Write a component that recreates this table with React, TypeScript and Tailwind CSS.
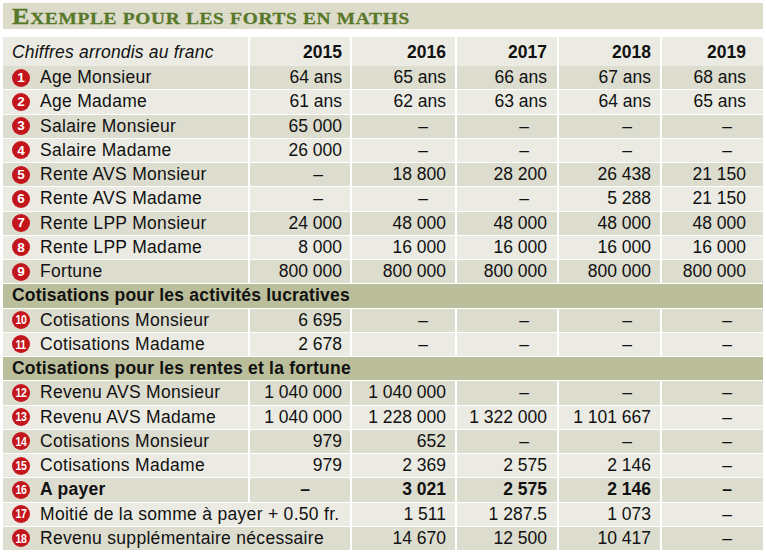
import React from 'react';

type Row =
  | { kind: 'section'; label: string }
  | { kind: 'data'; n: number; label: string; values: string[]; bold?: boolean; wide?: boolean };

const YEARS = ['2015', '2016', '2017', '2018', '2019'];

const ROWS: Row[] = [
  { kind: 'data', n: 1, label: 'Age Monsieur', values: ['64 ans', '65 ans', '66 ans', '67 ans', '68 ans'] },
  { kind: 'data', n: 2, label: 'Age Madame', values: ['61 ans', '62 ans', '63 ans', '64 ans', '65 ans'] },
  { kind: 'data', n: 3, label: 'Salaire Monsieur', values: ['65 000', '–', '–', '–', '–'] },
  { kind: 'data', n: 4, label: 'Salaire Madame', values: ['26 000', '–', '–', '–', '–'] },
  { kind: 'data', n: 5, label: 'Rente AVS Monsieur', values: ['–', '18 800', '28 200', '26 438', '21 150'] },
  { kind: 'data', n: 6, label: 'Rente AVS Madame', values: ['–', '–', '–', '5 288', '21 150'] },
  { kind: 'data', n: 7, label: 'Rente LPP Monsieur', values: ['24 000', '48 000', '48 000', '48 000', '48 000'] },
  { kind: 'data', n: 8, label: 'Rente LPP Madame', values: ['8 000', '16 000', '16 000', '16 000', '16 000'] },
  { kind: 'data', n: 9, label: 'Fortune', values: ['800 000', '800 000', '800 000', '800 000', '800 000'] },
  { kind: 'section', label: 'Cotisations pour les activités lucratives' },
  { kind: 'data', n: 10, label: 'Cotisations Monsieur', values: ['6 695', '–', '–', '–', '–'] },
  { kind: 'data', n: 11, label: 'Cotisations Madame', values: ['2 678', '–', '–', '–', '–'] },
  { kind: 'section', label: 'Cotisations pour les rentes et la fortune' },
  { kind: 'data', n: 12, label: 'Revenu AVS Monsieur', values: ['1 040 000', '1 040 000', '–', '–', '–'] },
  { kind: 'data', n: 13, label: 'Revenu AVS Madame', values: ['1 040 000', '1 228 000', '1 322 000', '1 101 667', '–'] },
  { kind: 'data', n: 14, label: 'Cotisations Monsieur', values: ['979', '652', '–', '–', '–'] },
  { kind: 'data', n: 15, label: 'Cotisations Madame', values: ['979', '2 369', '2 575', '2 146', '–'] },
  { kind: 'data', n: 16, label: 'A payer', values: ['–', '3 021', '2 575', '2 146', '–'], bold: true },
  { kind: 'data', n: 17, label: 'Moitié de la somme à payer + 0.50 fr.', values: ['', '1 511', '1 287.5', '1 073', '–'], wide: true },
  { kind: 'data', n: 18, label: 'Revenu supplémentaire nécessaire', values: ['', '14 670', '12 500', '10 417', '–'], wide: true },
];

// right padding per year column, for figures and for dashes
const NUM_PAD = ['pr-[8px]', 'pr-[9px]', 'pr-[10px]', 'pr-[9px]', 'pr-[17px]'];
const DASH_PAD = ['pr-[27px]', 'pr-[27px]', 'pr-[28px]', 'pr-[28px]', 'pr-[31px]'];

const GRID = 'grid grid-cols-[245px_100px_103px_100px_101px_101px] gap-x-[2px]';

const Badge = ({ n }: { n: number }) => (
  <span className="flex h-[18px] w-[18px] shrink-0 items-center justify-center rounded-full bg-[#c3161c] font-['Liberation_Sans_Narrow','Liberation_Sans',Arial,sans-serif] text-[13.5px] font-bold leading-none text-white">
    <span className={n > 9 ? 'inline-block scale-x-[0.78] tracking-[-0.5px]' : ''}>{n}</span>
  </span>
);

export default function App() {
  let dataIndex = 0;

  return (
    <div className="min-h-screen bg-white px-[3px] pt-[3px] font-['Liberation_Sans',Arial,sans-serif] text-[17.5px] text-[#111]">
      <div className="flex h-[26px] w-[760px] items-center bg-[#dddccb] pl-[9px]">
        <h1 className="inline-block origin-left scale-x-[1.14] whitespace-nowrap font-['Liberation_Serif',serif] font-bold leading-none text-[#587829] tracking-[0.6px] [-webkit-text-stroke:0.3px_#587829]">
          <span className="text-[23px]">E</span>
          <span className="text-[17px] uppercase">xemple pour les forts en maths</span>
        </h1>
      </div>

      <div className="mt-[8px] w-[760px]">
        <div className={`${GRID} h-[28px] leading-[31px]`}>
          <div className="bg-[#ebebe3] pl-[9px] italic tracking-[0.2px]">Chiffres arrondis au franc</div>
          {YEARS.map((y, i) => (
            <div key={y} className={`bg-[#ebebe3] text-right font-bold ${NUM_PAD[i]}`}>
              {y}
            </div>
          ))}
        </div>

        {ROWS.map((row, ri) => {
          if (row.kind === 'section') {
            dataIndex = 0;
            return (
              <div key={ri} className="h-[24.25px] border-t border-white bg-[#bbbe9b] pl-[9px] font-bold leading-[23px] tracking-[0.2px]">
                {row.label}
              </div>
            );
          }
          const dark = dataIndex % 2 === 0;
          dataIndex++;
          const bg = dark ? 'bg-[#dcdccf]' : 'bg-[#ebebe3]';
          return (
            <div key={ri} className={`${GRID} h-[24.25px] border-t border-white leading-[23px] ${row.bold ? 'font-bold' : ''}`}>
              <div className={`${bg} flex items-center gap-[10px] pl-[9px] whitespace-nowrap ${row.wide ? 'col-span-2' : ''}`}>
                <Badge n={row.n} />
                <span className="tracking-[0.3px]">{row.label}</span>
              </div>
              {row.values.map((v, i) => {
                if (row.wide && i === 0) return null;
                const isDash = v === '–';
                let pad = isDash ? DASH_PAD[i] : NUM_PAD[i];
                if (isDash && row.bold && i === 0) pad = 'pr-[40px]';
                return (
                  <div key={i} className={`${bg} text-right ${pad}`}>
                    {v}
                  </div>
                );
              })}
            </div>
          );
        })}
      </div>
    </div>
  );
}
